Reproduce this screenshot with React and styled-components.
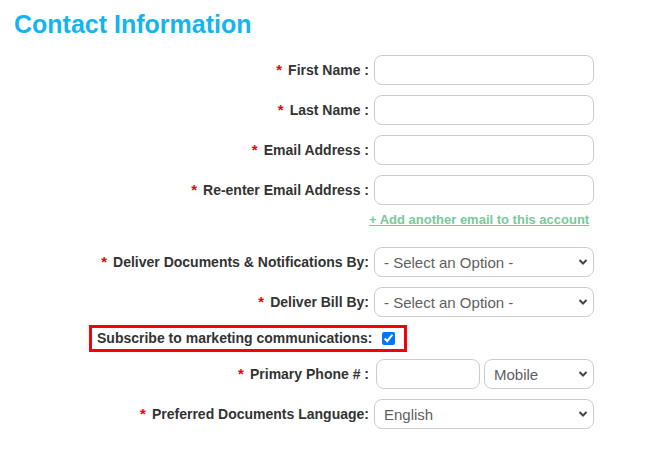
import React from "react";
import styled, { createGlobalStyle } from "styled-components";

const Global = createGlobalStyle`
  html, body { margin: 0; padding: 0; background: #fff; }
  body { font-family: Arial, "Liberation Sans", sans-serif; color: #333; }
`;

const Page = styled.div`
  width: 654px;
  height: 451px;
  display: flex;
  flex-direction: column;
`;

const Title = styled.h2`
  margin: 0;
  padding: 8px 0 0 14px;
  height: 47px;
  box-sizing: border-box;
  font-size: 25px;
  line-height: 32px;
  font-weight: bold;
  color: #14b4ef;
`;

const Row = styled.div`
  display: flex;
  align-items: center;
  height: 30px;
  margin-top: ${(p) => p.$mt ?? 10}px;
`;

const Label = styled.label`
  width: 369px;
  flex: none;
  padding-bottom: 2px;
  text-align: right;
  font-size: 14px;
  font-weight: bold;
  color: #333;
  white-space: nowrap;
`;

const Star = styled.span`
  color: #f2000a;
  font-size: 15px;
  margin-right: 6px;
`;

const Input = styled.input`
  box-sizing: border-box;
  width: ${(p) => p.$w ?? 220}px;
  height: 30px;
  margin-left: ${(p) => p.$ml ?? 5}px;
  border: 1px solid #ccc;
  border-radius: 8px;
  background: #fff;
  font-family: inherit;
  font-size: 15px;
  padding: 0 8px;
  outline: none;
`;

const SelectWrap = styled.div`
  position: relative;
  width: ${(p) => p.$w ?? 220}px;
  height: 30px;
  margin-left: ${(p) => p.$ml ?? 5}px;
`;

const Select = styled.select`
  appearance: none;
  box-sizing: border-box;
  width: 100%;
  height: 30px;
  border: 1px solid #ccc;
  border-radius: 8px;
  background: #fff;
  font-family: Arial, "Liberation Sans", sans-serif;
  font-size: 15px;
  color: #5f5f5f;
  padding: 0 24px 0 9px;
  outline: none;
`;

const Chevron = styled.svg`
  position: absolute;
  right: 6px;
  top: 11px;
  width: 10px;
  height: 8px;
  pointer-events: none;
`;

const LinkRow = styled.div`
  padding-left: 369px;
  margin-top: 6px;
  height: 16px;
  line-height: 16px;
`;

const AddLink = styled.a`
  font-size: 13px;
  font-weight: bold;
  color: #79c99a;
  text-decoration: underline;
  cursor: pointer;
`;

const Highlight = styled.div`
  display: flex;
  align-items: center;
  box-sizing: border-box;
  width: 318px;
  height: 27px;
  margin: 8px 0 0 89px;
  padding-left: 5px;
  border: 3px solid #f5000a;
`;

const CheckLabel = styled.span`
  padding-bottom: 2px;
  font-size: 14px;
  font-weight: bold;
  color: #333;
  white-space: nowrap;
`;

const Check = styled.input`
  width: 13px;
  height: 13px;
  margin: 0 0 0 10px;
`;

const Field = ({ label, w, ml }) => (
  <Row>
    <Label>
      <Star>*</Star>
      {label}
    </Label>
    <Input type="text" $w={w} $ml={ml} />
  </Row>
);

const Dropdown = ({ value, w, ml, options }) => (
  <SelectWrap $w={w} $ml={ml}>
    <Select defaultValue={value}>
      {options.map((o) => (
        <option key={o}>{o}</option>
      ))}
    </Select>
    <Chevron viewBox="0 0 10 8">
      <path d="M1.5 2 L5 5.5 L8.5 2" fill="none" stroke="#444" strokeWidth="2" />
    </Chevron>
  </SelectWrap>
);

export default function App() {
  return (
    <Page>
      <Global />
      <Title>Contact Information</Title>
      <Row $mt={8}>
        <Label>
          <Star>*</Star>First Name :
        </Label>
        <Input type="text" />
      </Row>
      <Field label="Last Name :" />
      <Field label="Email Address :" />
      <Field label="Re-enter Email Address :" />
      <LinkRow>
        <AddLink>+ Add another email to this account</AddLink>
      </LinkRow>
      <Row $mt={20}>
        <Label>
          <Star>*</Star>Deliver Documents &amp; Notifications By:
        </Label>
        <Dropdown value="- Select an Option -" options={["- Select an Option -", "Email", "Mail"]} />
      </Row>
      <Row>
        <Label>
          <Star>*</Star>Deliver Bill By:
        </Label>
        <Dropdown value="- Select an Option -" options={["- Select an Option -", "Email", "Mail"]} />
      </Row>
      <Highlight>
        <CheckLabel>Subscribe to marketing communications:</CheckLabel>
        <Check type="checkbox" defaultChecked />
      </Highlight>
      <Row $mt={7}>
        <Label>
          <Star>*</Star>Primary Phone # :
        </Label>
        <Input type="text" $w={104} $ml={7} />
        <Dropdown value="Mobile" w={110} ml={4} options={["Mobile", "Home", "Work"]} />
      </Row>
      <Row>
        <Label>
          <Star>*</Star>Preferred Documents Language:
        </Label>
        <Dropdown value="English" options={["English", "Español"]} />
      </Row>
    </Page>
  );
}
